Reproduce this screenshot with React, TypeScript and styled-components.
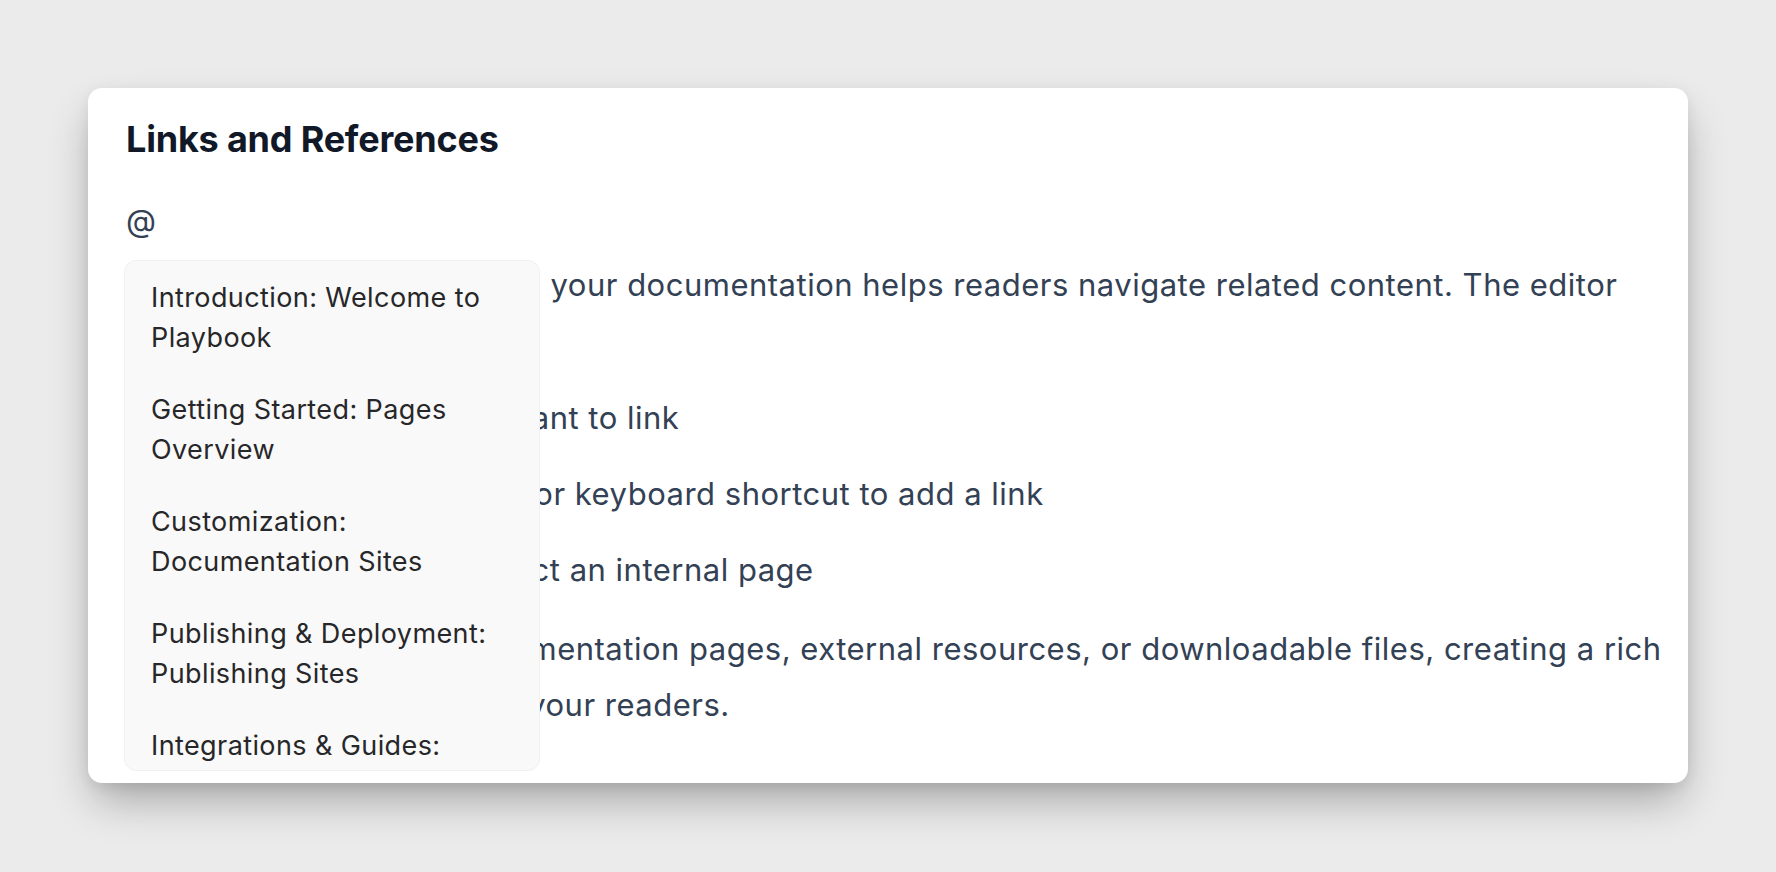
import styled, { createGlobalStyle } from 'styled-components';

const GlobalStyle = createGlobalStyle`
    html, body {
        margin: 0;
        padding: 0;
        background: #ebebeb;
    }
    * {
        box-sizing: border-box;
    }
`

const Page = styled.div`
    min-height: 100vh;
    padding: 88px;
    display: flex;
    align-items: flex-start;
    font-family: Inter, "Noto Sans", sans-serif;
`
const Card = styled.section`
    flex: 1;
    background: #ffffff;
    border-radius: 14px;
    padding: 30px 24px 30px 38px;
    box-shadow: 0 22px 44px -6px rgba(0, 0, 0, 0.3), 0 4px 14px rgba(0, 0, 0, 0.07);
    overflow: hidden;
`
const Title = styled.h2`
    margin: 0 0 32px;
    font-size: 36px;
    line-height: 1.2;
    font-weight: 700;
    color: #111827;
    letter-spacing: -0.2px;
`
const Editor = styled.div`
    font-size: 31px;
    line-height: 56px;
    letter-spacing: 0.5px;
    color: #334155;
`
const MentionLine = styled.div`
    position: relative;
    margin-bottom: 8px;
`
const Paragraph = styled.p`
    margin: 0 0 20px;
`
const Steps = styled.ul`
    margin: 21px 0 23px;
    padding: 0;
    list-style: none;
`
const Step = styled.li`
    margin-bottom: 20px;
    &:last-child {
        margin-bottom: 0;
    }
`
const SuggestionMenu = styled.ul`
    position: absolute;
    top: calc(100% + 11px);
    left: -2px;
    z-index: 2;
    width: 416px;
    max-height: 511px;
    overflow: hidden;
    margin: 0;
    padding: 1px 0;
    list-style: none;
    background: #f9f9f9;
    border: 1px solid #f0f0f0;
    border-radius: 12px;
`
const MenuItem = styled.li`
    padding: 16px 24px 16px 26px;
    font-size: 27px;
    line-height: 40px;
    letter-spacing: 0.4px;
    color: #27272a;
`

const pages = [
    'Introduction: Welcome to Playbook',
    'Getting Started: Pages Overview',
    'Customization: Documentation Sites',
    'Publishing & Deployment: Publishing Sites',
    'Integrations & Guides: Connecting Tools',
    'Reference: Keyboard Shortcuts',
];

const steps = [
    'Choose the text that you want to link',
    'Use the toolbar link button or keyboard shortcut to add a link',
    'Enter @ to search and select an internal page',
];

export default function App() {
    return (
        <>
            <GlobalStyle />
            <Page>
                <Card>
                    <Title>Links and References</Title>
                    <Editor>
                        <MentionLine>
                            @
                            <SuggestionMenu>
                                {pages.map((p) => (
                                    <MenuItem key={p}>{p}</MenuItem>
                                ))}
                            </SuggestionMenu>
                        </MentionLine>
                        <Paragraph style={{ marginBottom: 0 }}>
                            Using links among pages in your documentation helps readers navigate related content. The editor
                            makes this simple:
                        </Paragraph>
                        <Steps>
                            {steps.map((s) => (
                                <Step key={s}>{s}</Step>
                            ))}
                        </Steps>
                        <Paragraph>
                            Links can go to other documentation pages, external resources, or downloadable files, creating a rich
                            and simple experience for your readers.
                        </Paragraph>
                    </Editor>
                </Card>
            </Page>
        </>
    );
}
